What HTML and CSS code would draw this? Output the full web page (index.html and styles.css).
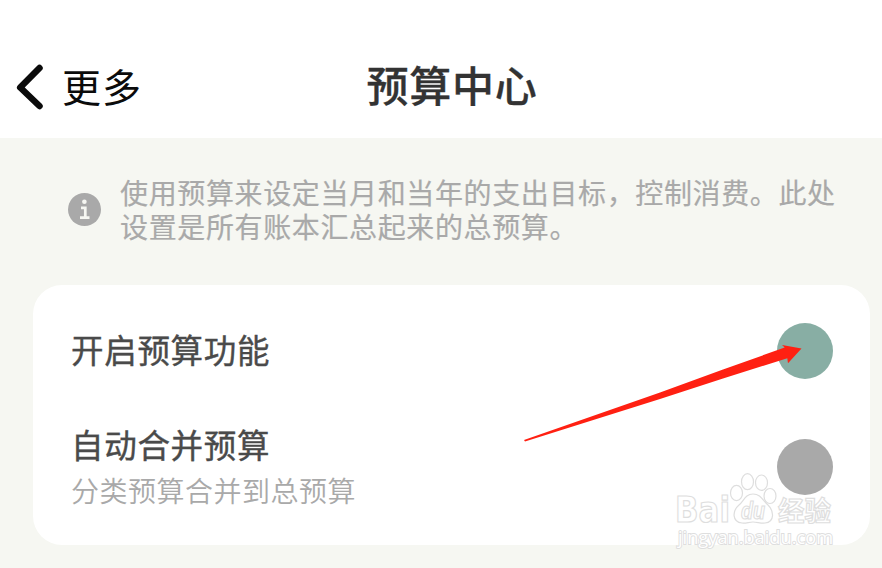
FILE: index.html
```html
<!DOCTYPE html>
<html lang="zh-CN">
<head>
    <meta charset="UTF-8">
    <meta name="viewport" content="width=device-width, initial-scale=1.0">
    <title>预算中心</title>
    <link rel="stylesheet" href="styles.css">
</head>
<body>
    <header class="header">
        <a class="back">
            <svg class="back-icon" viewBox="0 0 28 46" fill="none" stroke="currentColor" stroke-width="6.5" stroke-linecap="round" stroke-linejoin="round">
                <polyline points="23.500 4 4.200 23.500 23.500 42"></polyline>
            </svg>
            <span>更多</span>
        </a>
        <h1>预算中心</h1>
    </header>

    <main>
        <div class="notice">
            <svg class="info-icon" viewBox="0 0 33 33">
                <circle cx="16.5" cy="16.5" r="16.5" fill="#a9a9a9"></circle>
                <circle cx="16.4" cy="8.8" r="2.3" fill="#f6f7f2"></circle>
                <path d="M13 14.8h4.3v9.8M12 24.7h9.5" fill="none" stroke="#f6f7f2" stroke-width="2.7"></path>
            </svg>
            <p>使用预算来设定当月和当年的支出目标，控制消费。此处<br>设置是所有账本汇总起来的总预算。</p>
        </div>

        <div class="card">
            <div class="row">
                <h2>开启预算功能</h2>
                <span class="switch on"></span>
            </div>
            <div class="row">
                <div>
                    <h2>自动合并预算</h2>
                    <p class="desc">分类预算合并到总预算</p>
                </div>
                <span class="switch"></span>
            </div>
        </div>
    </main>

    <svg class="arrow" viewBox="0 0 280 98">
        <path d="M0 96 136 48.500 199 25.500 260.700 3.500 258 1 277.500 4.500 264 19.300 263.300 14.300 199 34.500 136 55 1 97.500Z" fill="#ff2012"></path>
    </svg>

    <svg class="watermark" viewBox="0 0 170 84">
        <g class="mark">
            <text class="latin" x="3" y="54" textLength="55" lengthAdjust="spacingAndGlyphs">Bai</text>
            <ellipse cx="64.500" cy="25" rx="6" ry="7.700"></ellipse>
            <ellipse cx="75.500" cy="13.700" rx="6" ry="8"></ellipse>
            <ellipse cx="89.500" cy="14.700" rx="6" ry="7.700"></ellipse>
            <ellipse cx="98" cy="28" rx="6" ry="7.500"></ellipse>
            <path d="M81 26c-8 0-9 7-14 11-7 6-7 17 3 18 4 .5 7-1 11-1s8 1.500 12 1c10-1 9-12 3-18-5-4-7-11-15-11z"></path>
            <text class="du" x="69" y="50.500" textLength="24" lengthAdjust="spacingAndGlyphs">du</text>
            <text class="cjk" x="106" y="52.500" textLength="53" lengthAdjust="spacingAndGlyphs">经验</text>
            <text class="url" x="6" y="76" textLength="155" lengthAdjust="spacingAndGlyphs">jingyan.baidu.com</text>
        </g>
    </svg>
</body>
</html>
```
FILE: styles.css
```css
* {
    margin: 0;
    padding: 0;
    box-sizing: border-box;
}

body {
    position: relative;
    height: 568px;
    overflow: hidden;
    background: #f6f7f2;
    font-family: "Noto Sans CJK SC", sans-serif;
}

.header {
    display: grid;
    grid-template-columns: 1fr auto 1fr;
    align-items: center;
    height: 138px;
    padding: 36px 0 0 16px;
    background: #fff;
}

.back {
    display: flex;
    align-items: center;
    gap: 18px;
    color: #0b0b0b;
    font-size: 39px;
    line-height: 50px;
    letter-spacing: 1px;
}

.back span {
    padding-bottom: 5px;
}

.back-icon {
    width: 28px;
    height: 46px;
}

h1 {
    padding: 0 0 7px 6px;
    color: #333;
    font-size: 42px;
    font-weight: 500;
    line-height: 50px;
    letter-spacing: 0.8px;
    -webkit-text-stroke: 0.3px #333;
}

.notice {
    display: flex;
    align-items: center;
    gap: 19px;
    height: 147px;
    padding: 0 0 4px 68px;
}

.notice p {
    padding-bottom: 2px;
    color: #a9a9a9;
    font-size: 28px;
    line-height: 34px;
    letter-spacing: 0.63px;
    white-space: nowrap;
    -webkit-text-stroke: 0.2px #a9a9a9;
}

.info-icon {
    flex: none;
    width: 33px;
    height: 33px;
}

.card {
    height: 260px;
    margin: 0 12px 0 33px;
    padding: 8px 37px 20px 38px;
    background: #fff;
    border-radius: 29px;
}

.row {
    display: flex;
    align-items: center;
    justify-content: space-between;
    height: 116px;
}

h2 {
    padding-bottom: 4px;
    color: #4a4a4a;
    font-size: 32.5px;
    font-weight: 400;
    line-height: 44px;
    letter-spacing: 0.7px;
    -webkit-text-stroke: 0.4px #4a4a4a;
}

.desc {
    padding-bottom: 2px;
    color: #a9a9a9;
    font-size: 28px;
    font-weight: 350;
    line-height: 41px;
    letter-spacing: 0.5px;
}

.switch {
    width: 56px;
    height: 56px;
    background: #a9a9a9;
    border-radius: 50%;
}

.switch.on {
    background: #88aea4;
}

.arrow {
    position: absolute;
    left: 524px;
    top: 344px;
    width: 280px;
    height: 98px;
}

.watermark {
    position: absolute;
    left: 672px;
    top: 468px;
    width: 170px;
    height: 84px;
}

.mark {
    fill: #fff;
    stroke: #dedede;
    stroke-width: 1.2px;
}

.latin {
    font: bold 35px "DejaVu Sans", sans-serif;
}

.du {
    font: italic bold 23px "Liberation Sans", sans-serif;
}

.cjk {
    font-size: 27px;
    font-weight: 700;
}

.url {
    font: 19px "Open Sans", sans-serif;
    stroke-width: 2px;
    paint-order: stroke;
}
```
